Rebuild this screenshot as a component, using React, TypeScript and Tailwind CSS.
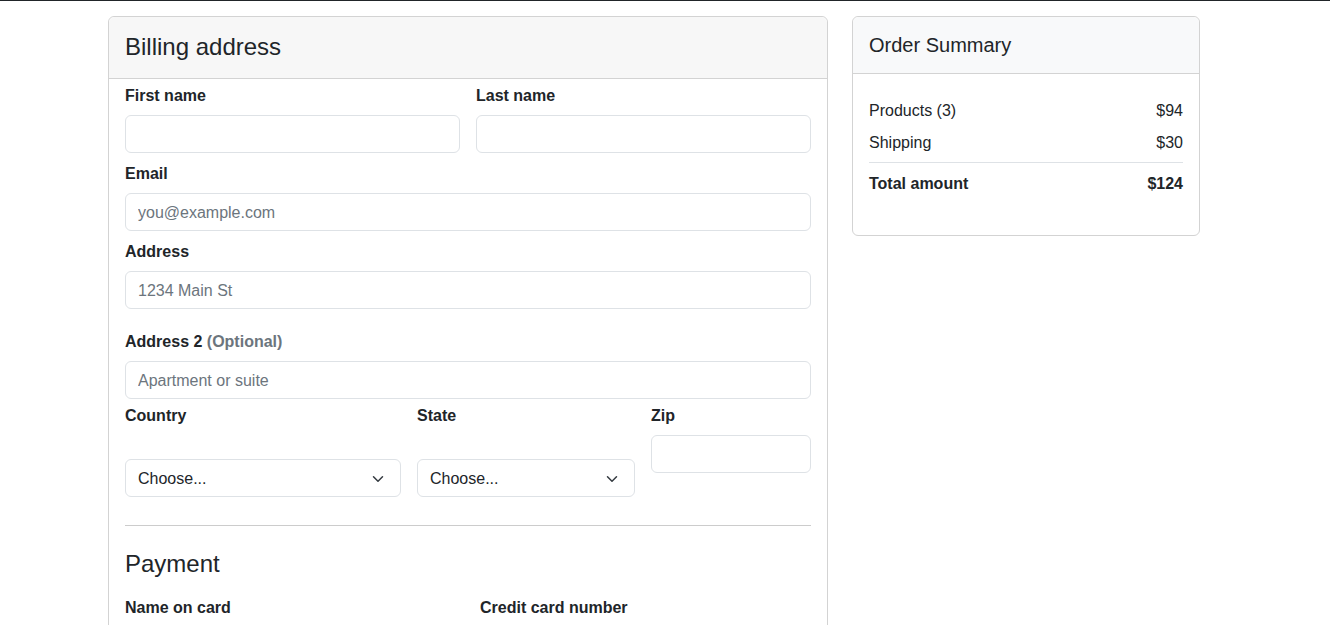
import React from "react";

const font = { fontFamily: '"Liberation Sans", Arial, sans-serif' };

const Label = ({ children }: { children: React.ReactNode }) => (
  <label className="block h-6 pt-px text-[16px] leading-6 font-bold text-[#212529]">{children}</label>
);

const Input = ({ placeholder = "", className = "" }: { placeholder?: string; className?: string }) => (
  <input
    placeholder={placeholder}
    className={`block w-full h-[38px] rounded-[6px] border border-[#dee2e6] bg-white px-3 pt-px text-[16px] text-[#212529] placeholder:text-[#6c757d] outline-none ${className}`}
  />
);

const Select = ({ className = "" }: { className?: string }) => (
  <div
    className={`flex h-[38px] items-center justify-between rounded-[6px] border border-[#dee2e6] bg-white pl-3 pr-4 pt-px text-[16px] text-[#212529] ${className}`}
  >
    <span>Choose...</span>
    <svg width="12" height="12" viewBox="0 0 16 16" fill="none">
      <path d="M2 5l6 6 6-6" stroke="#343a40" strokeWidth="2" strokeLinecap="round" strokeLinejoin="round" />
    </svg>
  </div>
);

const BillingCard = () => {
  return (
    <div className="w-[720px] shrink-0 rounded-[6px] border border-[#d3d3d3]">
      <div className="h-[62px] flex items-center px-4 pb-[2px] bg-[#f7f7f7] border-b border-[#d3d3d3] rounded-t-[6px]">
        <h4 className="text-[24px] font-medium text-[#212529]">Billing address</h4>
      </div>
      <div className="px-4 pt-1 pb-6">
        <div className="grid grid-cols-2 gap-4">
          <div>
            <Label>First name</Label>
            <Input className="mt-2" />
          </div>
          <div>
            <Label>Last name</Label>
            <Input className="mt-2" />
          </div>
        </div>

        <div className="mt-2">
          <Label>Email</Label>
          <Input className="mt-2" placeholder="you@example.com" />
        </div>

        <div className="mt-2">
          <Label>Address</Label>
          <Input className="mt-2" placeholder="1234 Main St" />
        </div>

        <div className="mt-5">
          <Label>
            Address 2 <span className="text-[#6c757d]">(Optional)</span>
          </Label>
          <Input className="mt-2" placeholder="Apartment or suite" />
        </div>

        <div className="mt-1 flex gap-4">
          <div className="w-[276px]">
            <Label>Country</Label>
            <Select className="mt-8" />
          </div>
          <div className="w-[218px]">
            <Label>State</Label>
            <Select className="mt-8" />
          </div>
          <div className="flex-1">
            <Label>Zip</Label>
            <Input className="mt-2" />
          </div>
        </div>

        <hr className="mt-7 border-t border-[#cccccc]" />

        <h4 className="mt-[23px] text-[24px] leading-[29px] font-medium text-[#212529]">Payment</h4>

        <div className="mt-[17px] grid grid-cols-2 gap-6">
          <div>
            <Label>Name on card</Label>
            <Input className="mt-2" />
          </div>
          <div>
            <Label>Credit card number</Label>
            <Input className="mt-2" />
          </div>
        </div>
      </div>
    </div>
  );
};

const SummaryCard = () => (
  <div className="w-[348px] shrink-0 self-start rounded-[6px] border border-[#d3d3d3]">
    <div className="h-[57px] flex items-center px-4 bg-[#f8f9fa] border-b border-[#d3d3d3] rounded-t-[6px]">
      <h5 className="text-[20px] font-medium text-[#212529]">Order Summary</h5>
    </div>
    <div className="px-4 pt-[25px] pb-[39px] text-[16px] text-[#212529]">
      <div className="flex justify-between leading-6">
        <span>Products (3)</span>
        <span>$94</span>
      </div>
      <div className="mt-2 flex justify-between leading-6">
        <span>Shipping</span>
        <span>$30</span>
      </div>
      <div className="mt-[7px] border-t border-[#dee2e6] pt-[9px] flex justify-between leading-6 font-bold">
        <span>Total amount</span>
        <span>$124</span>
      </div>
    </div>
  </div>
);

export default function App() {
  return (
    <div className="min-h-[625px] bg-white border-t border-[#212529]" style={font}>
      <div className="flex gap-6 pl-[108px] pt-[15px] pb-6">
        <BillingCard />
        <SummaryCard />
      </div>
    </div>
  );
}
